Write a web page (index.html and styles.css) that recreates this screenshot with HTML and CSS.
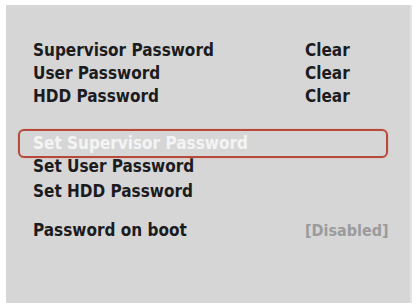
FILE: index.html
```html
<!DOCTYPE html>
<html>
<head>
<meta charset="utf-8">
<link rel="stylesheet" href="styles.css">
</head>
<body>
<div class="panel">
  <div class="group">
    <div class="row"><span class="label">Supervisor Password</span><span class="value">Clear</span></div>
    <div class="row"><span class="label">User Password</span><span class="value">Clear</span></div>
    <div class="row"><span class="label">HDD Password</span><span class="value">Clear</span></div>
  </div>
  <div class="group lower">
    <div class="row selected"><span class="label">Set Supervisor Password</span></div>
    <div class="row"><span class="label">Set User Password</span></div>
    <div class="row"><span class="label">Set HDD Password</span></div>
    <div class="row boot"><span class="label">Password on boot</span><span class="value muted">[Disabled]</span></div>
  </div>
</div>
</body>
</html>
```

FILE: styles.css
```css
html, body {
  margin: 0;
  padding: 0;
  background: #ffffff;
}
body {
  padding: 5px 6px 4px 6px;
  width: 418px;
  height: 307px;
  box-sizing: border-box;
}
.panel {
  height: 298px;
  box-sizing: border-box;
  background: #d6d6d6;
  border-right: 2px solid #e4e4e4;
  padding: 33px 0 0 0;
  font-family: "DejaVu Sans Condensed", "DejaVu Sans", sans-serif;
  font-weight: bold;
  font-size: 17px;
  color: #1c1c1e;
}
.group {
  display: flex;
  flex-direction: column;
}
.row {
  display: grid;
  grid-template-columns: 272px auto;
  height: 23px;
  align-items: center;
  padding-left: 27px;
}
.lower {
  margin-top: 22px;
}
.lower .row {
  height: 24.5px;
}
.selected {
  margin-left: 12px;
  margin-right: 22px;
  margin-bottom: -4px;
  padding-left: 13px;
  padding-bottom: 2px;
  height: 29px !important;
  border: 2px solid #b34a3c;
  border-radius: 6px;
  box-sizing: border-box;
  color: #f4f4f4;
  box-shadow: 0 0 2px #e8a89c;
  position: relative;
  z-index: 1;
}
.row.boot {
  margin-top: 15px;
}
.muted {
  color: #9b9b9d;
  font-size: 16px;
}
```
